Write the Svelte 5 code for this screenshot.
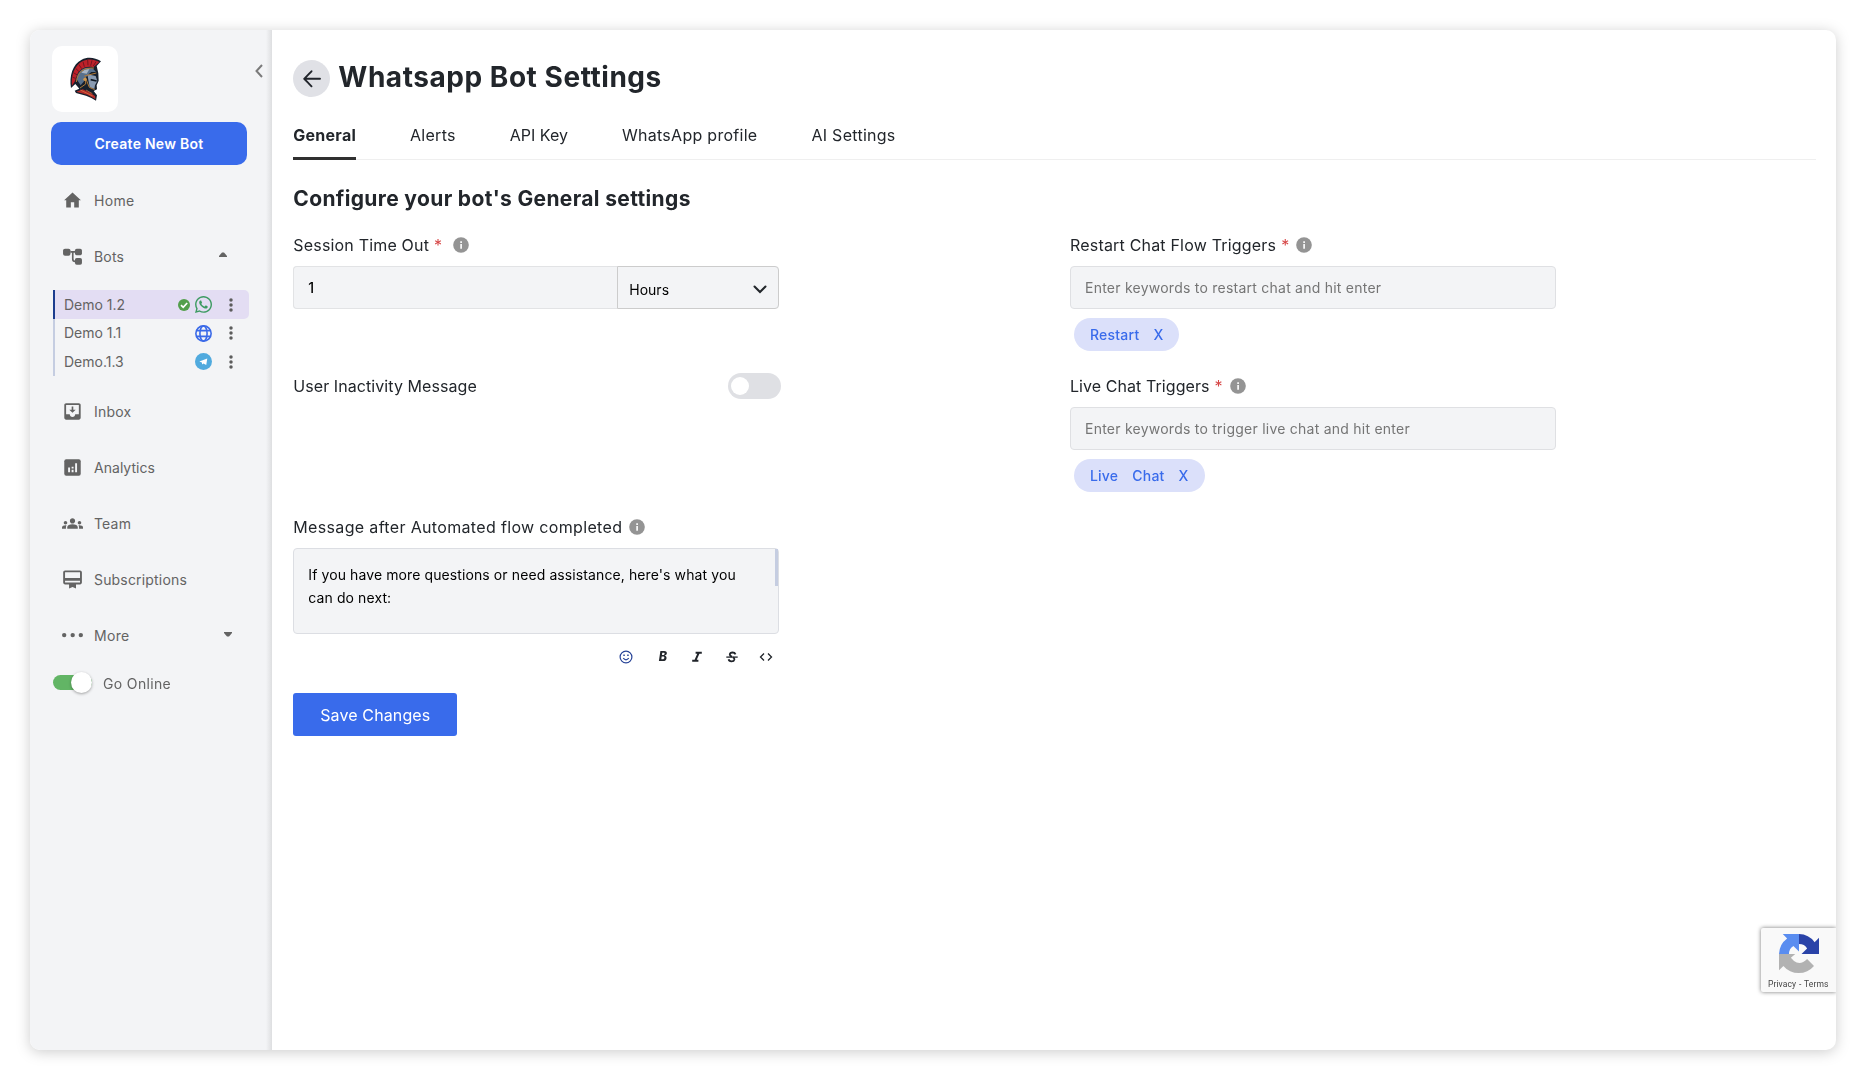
<script>
  let inactivity = $state(false);
  let online = $state(true);

  const nav = [
    { id: 'inbox', label: 'Inbox' },
    { id: 'analytics', label: 'Analytics' },
    { id: 'team', label: 'Team' },
    { id: 'subs', label: 'Subscriptions' }
  ];
  const bots = [
    { name: 'Demo 1.2', channel: 'whatsapp', active: true },
    { name: 'Demo 1.1', channel: 'web', active: false },
    { name: 'Demo.1.3', channel: 'telegram', active: false }
  ];
  const tabs = ['General', 'Alerts', 'API Key', 'WhatsApp profile', 'AI Settings'];
</script>

{#snippet info()}
  <svg class="info" viewBox="0 0 16 16"><circle cx="8" cy="8" r="7.800" fill="#949494" /><path d="M8.100 7v4.700M8.100 4.200v1.700" stroke="#fff" stroke-width="1.600" fill="none" /></svg>
{/snippet}

{#snippet navIcon(id)}
  <svg class="nav-icon" viewBox="0 0 24 24" fill="#636363">
    {#if id === 'home'}
      <path transform="translate(.5 .2) scale(.96)" d="M10 20.500v-6h4v6h5.500V12H22L12 2.800 2 12h2.500v8.500z" />
    {:else if id === 'bots'}
      <g><rect x="1.200" y="3" width="8.500" height="8" rx="2.200" /><rect x="14.800" y="3" width="8" height="7.500" rx="2" /><rect x="14.800" y="13.800" width="8" height="7.700" rx="2" /><path d="M9.500 6.800h5.500M12.300 6.800v8q0 2.700 2.700 2.700" fill="none" stroke="#636363" stroke-width="1.900" /></g>
    {:else if id === 'inbox'}
      <path transform="translate(-.5 -.5) scale(1.040)" d="M19 3H4.990c-1.110 0-1.980.89-1.980 2L3 19c0 1.100.88 2 1.990 2H19c1.100 0 2-.9 2-2V5c0-1.110-.9-2-2-2zm0 12h-4c0 1.660-1.350 3-3 3s-3-1.340-3-3H4.990V5H19v10zm-3.500-5h-2.600V6.500h-1.800V10H8.500l3.500 3.500z" />
    {:else if id === 'analytics'}
      <rect x="2.600" y="2.600" width="18.800" height="18.800" rx="2.200" /><path d="M7 12h2.200v5.500H7zM11 14.500h2.200v3H11zM11 11h2.200v2H11zM15 7h2.200v10.500H15z" fill="#f3f4f6" />
    {:else if id === 'team'}
      <path d="M12 12.750c1.630 0 3.070.39 4.240.9 1.080.48 1.760 1.560 1.760 2.730V18H6v-1.610c0-1.180.68-2.260 1.760-2.730 1.170-.52 2.610-.91 4.240-.91zM4 13c1.100 0 2-.9 2-2s-.9-2-2-2-2 .9-2 2 .9 2 2 2zm1.130 1.100c-.37-.06-.74-.1-1.130-.1-.99 0-1.930.21-2.780.58C.48 14.900 0 15.620 0 16.430V18h4.500v-1.610c0-.83.23-1.610.63-2.290zM20 13c1.100 0 2-.9 2-2s-.9-2-2-2-2 .9-2 2 .9 2 2 2zm4 3.430c0-.81-.48-1.530-1.220-1.850-.85-.37-1.790-.58-2.780-.58-.39 0-.76.04-1.130.1.400.68.630 1.460.630 2.290V18H24v-1.570zM12 6c1.660 0 3 1.340 3 3s-1.340 3-3 3-3-1.340-3-3 1.340-3 3-3z" />
    {:else if id === 'subs'}
      <path transform="translate(-.8 -.5) scale(1.070)" d="M20 2H4c-1.110 0-2 .89-2 2v11c0 1.110.89 2 2 2h4.300v4.300l3.700-1.500 3.700 1.500V17H20c1.110 0 2-.89 2-2V4c0-1.110-.89-2-2-2zm0 13H4v-2h16v2zm0-5H4V4h16v6z" />
    {:else}
      <circle cx="2.500" cy="11.500" r="2.500" /><circle cx="12.200" cy="11.500" r="2.500" /><circle cx="21.500" cy="11.500" r="2.500" />
    {/if}
  </svg>
{/snippet}

<div class="window">
  <aside>
    <div class="brand">
      <div class="logo">
        <svg viewBox="6 18 198 198">
          <path d="M63 144C57 108 68 72 95 59C113 50 135 52 153 64L140 78L145 100L146 122L140 136L141 148L131 153L141 166L138 182L124 174L108 167L78 159L74 152L88 146L76 132Z" fill="#17202d" />
          <path d="M66 137C63 106 73 77 97 64C115 55 132 58 148 66L130 82C104 76 84 90 79 112C76 122 73 129 66 137Z" fill="#bd2029" />
          <path d="M68 112l12 4M70 98l12 7M77 85l10 10M87 74l8 12M99 65l4 15M113 60l1 16M126 61l-4 16M138 65l-8 13" stroke="#62141d" stroke-width="2.500" />
          <path d="M80 118C82 97 96 84 112 83L128 85L138 96H124L112 106L102 124L92 136Z" fill="#58708c" />
          <path d="M94 98q9-11 24-10l-8 13z" fill="#a7b4c3" />
          <path d="M112 103L137 108L142 123L135 136L133 147L119 142Z" fill="#8a9bb1" />
          <path d="M79 126C83 94 102 83 132 84M103 108L139 99M106 112L118 142L134 149M90 144l17-12v-19" fill="none" stroke="#b07a38" stroke-width="3" />
          <path d="M122 119l18 4" stroke="#111923" stroke-width="5" />
          <circle cx="105" cy="118" r="5" fill="#d0974c" />
          <path d="M79 155L98 148L118 157L135 168L136 177L112 164Z" fill="#b42a28" />
          <path d="M108 150l19 11M91 150l37 18" stroke="#e08445" stroke-width="2" />
        </svg>
      </div>
      <svg class="collapse" viewBox="0 0 8 14"><path d="M7 1 1.500 7 7 13" fill="none" stroke="#7b7b7b" stroke-width="2" /></svg>
    </div>
    <button class="create">Create New Bot</button>

    <nav>
      <a class="item wide" href="#home">{@render navIcon('home')}<span>Home</span></a>
      <a class="item" href="#bots">{@render navIcon('bots')}<span>Bots</span><svg class="caret up" viewBox="0 0 8 5"><path d="M0 5V4L3 .5h2L8 4v1z" fill="#636363" /></svg></a>
      <ul>
        {#each bots as bot}
          <li class:active={bot.active}>
            <span class="bot-name">{bot.name}</span>
            {#if bot.channel === 'whatsapp'}
              <svg class="check" viewBox="0 0 12 12"><circle cx="6" cy="6" r="6" fill="#539f4c" /><path d="m3 6.200 2.200 2.100L9.200 4" fill="none" stroke="#fff" stroke-width="1.700" /></svg>
              <svg class="channel" viewBox="0 32 448 448"><path fill="#3d9b62" d="M380.900 97.100C339 55.100 283.200 32 223.900 32c-122.400 0-222 99.600-222 222 0 39.100 10.200 77.300 29.600 111L0 480l117.700-30.900c32.400 17.700 68.900 27 106.100 27h.1c122.300 0 224.100-99.600 224.100-222 0-59.300-25.200-115-67.100-157zm-157 341.600c-33.200 0-65.700-8.900-94-25.700l-6.700-4-69.800 18.300L72 359.200l-4.400-7c-18.500-29.400-28.200-63.300-28.200-98.200 0-101.700 82.800-184.500 184.600-184.500 49.300 0 95.600 19.200 130.400 54.100 34.800 34.900 56.200 81.200 56.100 130.500 0 101.800-84.900 184.600-186.600 184.600zm101.200-138.200c-5.500-2.800-32.800-16.200-37.900-18-5.100-1.900-8.800-2.800-12.500 2.800-3.700 5.600-14.300 18-17.600 21.800-3.200 3.700-6.500 4.200-12 1.400-32.600-16.300-54-29.100-75.500-66-5.700-9.800 5.700-9.100 16.300-30.300 1.800-3.700.9-6.900-.5-9.700-1.400-2.800-12.500-30.100-17.100-41.200-4.500-10.800-9.100-9.300-12.500-9.500-3.200-.2-6.900-.2-10.600-.2-3.700 0-9.700 1.400-14.800 6.900-5.100 5.600-19.400 19-19.400 46.300 0 27.300 19.900 53.700 22.600 57.400 2.800 3.700 39.100 59.700 94.800 83.800 35.200 15.200 49 16.500 66.600 13.900 10.700-1.600 32.800-13.400 37.400-26.400 4.600-13 4.600-24.100 3.200-26.400-1.300-2.500-5-3.900-10.500-6.600z" /></svg>
            {:else if bot.channel === 'web'}
              <svg class="channel" viewBox="0 0 18 18" fill="none" stroke="#3b6ae8" stroke-width="1.700"><circle cx="9" cy="9" r="8.100" /><ellipse cx="9" cy="9" rx="3.800" ry="8.100" /><path d="M1.500 6h15M1.500 12h15" /></svg>
            {:else}
              <svg class="channel" viewBox="0 0 18 18"><circle cx="9" cy="9" r="9" fill="#50aade" /><path d="M4.600 9 13 5.700 11.900 12.600 9 11 7.600 12.200 7.300 10z" fill="#fff" /></svg>
            {/if}
            <svg class="dots" viewBox="0 0 4 14" fill="#5c5c5c"><circle cx="2" cy="2" r="1.750" /><circle cx="2" cy="7" r="1.750" /><circle cx="2" cy="12" r="1.750" /></svg>
          </li>
        {/each}
      </ul>
      {#each nav as item}
        <a class="item" class:tight={item.id === 'analytics'} href="#{item.id}">{@render navIcon(item.id)}<span>{item.label}</span></a>
      {/each}
      <a class="item wide" href="#more">{@render navIcon('more')}<span>More</span><svg class="caret down" viewBox="0 0 8 5"><path d="M0 0v1l3 3.500h2L8 1V0z" fill="#636363" /></svg></a>
    </nav>
    <button class="online" class:on={online} onclick={() => (online = !online)}><i></i><span>Go Online</span></button>
  </aside>

  <main>
    <header>
      <button class="back" aria-label="Back"><svg viewBox="0 0 18 18" fill="none" stroke="#20242a" stroke-width="1.900" stroke-linecap="round" stroke-linejoin="round"><path d="M17 8.800H1.500M8.500 1.300 1.200 8.800l7.300 7.500" /></svg></button>
      <h1>Whatsapp Bot Settings</h1>
    </header>
    <div class="tabs">
      {#each tabs as tab, i}
        <button class="tab" class:current={i === 0} class:plain={tab === 'API Key'}>{tab}</button>
      {/each}
    </div>
    <h2>Configure your bot's General settings</h2>

    <div class="form">
      <section>
        <div class="label">Session Time Out <b>*</b><span class="gap"></span>{@render info()}</div>
        <div class="field split">
          <div class="value">1</div>
          <div class="select"><span>Hours</span><svg viewBox="0 0 14 9"><path d="m1.500 1.500 5.500 5.500 5.500-5.500" fill="none" stroke="#22262b" stroke-width="2.100" stroke-linecap="round" /></svg></div>
        </div>
      </section>
      <section>
        <div class="label roomy">Restart Chat Flow Triggers <b>*</b>{@render info()}</div>
        <div class="field placeholder">Enter keywords to restart chat and hit enter</div>
        <div class="chip"><span>Restart</span><span>X</span></div>
      </section>
      <section>
        <div class="switch-row">
          <div class="label close">User Inactivity Message</div>
          <button class="switch" class:checked={inactivity} aria-label="User Inactivity Message" onclick={() => (inactivity = !inactivity)}><i></i></button>
        </div>
      </section>
      <section>
        <div class="label close">Live Chat Triggers <b>*</b>{@render info()}</div>
        <div class="field placeholder">Enter keywords to trigger live chat and hit enter</div>
        <div class="chip"><span>Live</span><span>Chat</span><span>X</span></div>
      </section>
      <section>
        <div class="label loose">Message after Automated flow completed{@render info()}</div>
        <div class="message"><p>If you have more questions or need assistance, here's what you can do next:</p><i></i></div>
        <div class="tools">
          <svg viewBox="0 0 14 14" fill="none" stroke="#274397" stroke-width="1.200"><circle cx="7" cy="7" r="5.900" /><path d="M4.200 8.200q2.800 3.200 5.600 0" /><path d="M4.300 5.300h1.500M8.200 5.300h1.500" stroke-width="1.500" /></svg>
          <span>B</span>
          <svg viewBox="0 0 14 14" fill="none" stroke="#20242a" stroke-width="2"><path d="M5.600 2.800h6.200M2.200 10.700h6.200M8.700 2.800 5.300 10.700" /></svg>
          <svg viewBox="0 0 14 14" fill="none" stroke="#20242a"><path d="M10.500 4.300Q9.800 2.500 7.600 2.500 4.800 2.500 4.800 4.600 4.900 6 7 6.700M8 7.300Q9.700 8 9.400 9.500 8.900 11.500 6.400 11.400 4 11.300 3.600 9.300" stroke-width="1.800" /><path d="M1.300 7.100h11.400" stroke-width="1.300" /></svg>
          <svg viewBox="0 0 14 14" fill="none" stroke="#20242a" stroke-width="1.300"><path d="M5 3.500 1.500 7 5 10.500M9 3.500 12.500 7 9 10.500" /></svg>
        </div>
        <button class="save">Save Changes</button>
      </section>
    </div>

    <div class="recaptcha">
      <svg viewBox="0 0 64 64">
        <path d="M64 32V6l-7 7A32 32 0 0 0 32 0v16q9 0 13 7l-9 9z" fill="#2a43a8" />
        <path d="M32 0H6l7 7A32 32 0 0 0 0 32h16q0-9 7-13l9 9z" fill="#5a8df0" />
        <path d="M0 32v26l7-7a32 32 0 0 0 49 0L45 40q-11 11-21 3l-5-5 7-6z" fill="#b2b2b2" />
      </svg>
      <span>Privacy - Terms</span>
    </div>
  </main>
</div>

<style>
  :global(body) { margin: 0; background: #fff; }
  .window, .window * { box-sizing: border-box; }
  .window {
    position: relative; display: flex; width: 1806px; height: 1020px; margin: 30px; overflow: hidden;
    border-radius: 10px; background: #fff; font-family: "Inter", sans-serif; font-size: 14px; color: #22262b;
  }
  :global(#app) { display: flow-root; filter: drop-shadow(0 2px 7px rgba(0, 0, 0, .2)); }
  button { font: inherit; border: 0; padding: 0; }
  svg { display: block; flex: none; }

  aside { width: 242px; padding: 16px 15px 0 21px; background: linear-gradient(to right, #f3f4f6 236px, #dddee0 242px); }
  .brand { display: flex; justify-content: space-between; padding: 0 0 0 1px; }
  .logo { width: 66px; height: 66px; border-radius: 10px; background: #fff; }
  .logo svg { width: 66px; height: 66px; }
  .collapse { width: 8px; height: 14px; margin: 18px -6px 0 0; }
  .create {
    display: block; width: 196px; height: 43px; margin: 10px 0 7px; border-radius: 10px; background: #396beb;
    color: #fff; font-weight: 600; letter-spacing: .26px;
  }
  nav { color: #636363; letter-spacing: .18px; }
  .item { display: flex; align-items: center; height: 56px; padding-left: 11px; color: inherit; text-decoration: none; }
  .item span { margin: 1px 0 0 11px; line-height: 20px; }
  .wide { letter-spacing: .3px; }
  .tight { letter-spacing: .03px; }
  .nav-icon { width: 21px; height: 21px; overflow: visible; }
  .caret { width: 8px; height: 5px; }
  .up { margin: -3px 30px 0 auto; }
  .down { margin: -2px 25px 0 auto; }
  ul { margin: 6px 0 7px 2px; padding: 0; list-style: none; width: 196px; letter-spacing: 0; }
  li { display: flex; align-items: center; height: 28.5px; padding: 0 16px 0 9px; border-left: 2px solid #c5cde1; }
  li.active { height: 29px; background: #e3ddf3; border-left-color: #1c3c8e; border-radius: 0 5px 5px 0; }
  .bot-name { flex: 1; line-height: 20px; }
  .check { width: 12px; height: 12px; margin-right: 5px; }
  .channel { width: 17px; height: 17px; margin-right: 17px; }
  .dots { width: 4px; height: 14px; }
  .online { display: flex; align-items: center; height: 22px; margin: 8px 0 0 2px; background: none; color: #636363; letter-spacing: .35px; }
  .online i { display: flex; align-items: center; width: 39px; height: 15px; margin-right: 11px; border-radius: 8px; background: #b5b5b5; }
  .online i::before { content: ""; width: 21px; height: 21px; border-radius: 50%; background: #fff; box-shadow: 0 1px 3px rgba(0, 0, 0, .35); }
  .online.on i { justify-content: flex-end; background: #62b565; }
  .online span { margin-top: 2px; }

  main { flex: 1; padding: 30px 20px 0 21.3px; }
  header { display: flex; align-items: center; height: 37px; }
  .back { display: grid; place-items: center; width: 37px; height: 37px; border-radius: 50%; background: #e0e1e6; }
  .back svg { width: 18px; height: 18px; }
  h1 { margin: -3px 0 0 8px; font-size: 28px; line-height: 36px; font-weight: 700; letter-spacing: .54px; }
  .tabs { display: flex; gap: 54px; height: 63px; align-items: flex-end; box-shadow: inset 0 -1px #efefef; }
  .tab { height: 40px; padding: 3px 0 10px; border-bottom: 3px solid transparent; background: none; color: inherit; font-size: 16px; line-height: 24px; letter-spacing: .28px; }
  .plain { letter-spacing: 0; }
  .current { font-weight: 700; letter-spacing: .25px; border-color: #303030; }
  h2 { margin: 25px 0 22px; font-size: 21px; line-height: 28px; font-weight: 700; letter-spacing: .35px; }

  .form { display: grid; grid-template-columns: 776.7px 486px; grid-template-rows: 141px 141px auto; }
  section { width: 486px; }
  .label { display: flex; align-items: center; height: 20px; font-size: 16px; letter-spacing: .18px; }
  .label b { margin-left: 5px; color: #d64545; font-weight: 400; }
  .roomy { letter-spacing: .19px; }
  .close { letter-spacing: .07px; }
  .loose { letter-spacing: .34px; }
  .gap { width: 4px; }
  .info { width: 16px; height: 16px; margin-left: 7px; }
  .field { display: flex; align-items: center; height: 43px; margin-top: 11px; border: 1px solid #dfe0e3; border-radius: 4px; background: #f3f4f6; }
  .placeholder { padding-left: 14px; color: #757575; letter-spacing: .24px; }
  .split { border: 0; color: #000; }
  .value { width: 324px; height: 43px; padding-left: 14px; border: 1px solid #e2e3e5; border-right: 0; border-radius: 4px 0 0 4px; line-height: 41px; font-weight: 500; }
  .select { display: flex; flex: 1; align-items: center; justify-content: space-between; height: 43px; padding: 3px 11px 0; border: 1px solid #ccc; border-radius: 0 4px 4px 0; }
  .select svg { width: 14px; height: 9px; }
  .chip { display: inline-flex; align-items: center; gap: 14px; height: 33px; margin: 9px 0 0 4px; padding: 0 16px; border-radius: 17px; background: #dbe0fa; color: #396beb; font-weight: 500; letter-spacing: .22px; }
  .switch-row { display: flex; justify-content: space-between; width: 488px; }
  .switch { display: flex; align-items: center; width: 53px; height: 26px; margin-top: -3px; padding: 0 3px; border-radius: 13px; background: #dfe0e4; }
  .switch i { width: 18px; height: 18px; border-radius: 50%; background: #fff; }
  .checked { justify-content: flex-end; background: #396beb; }
  .message { display: flex; justify-content: space-between; height: 86px; margin-top: 11px; padding: 0 0 0 14px; border: 1px solid #dcdee3; border-radius: 4px; background: #f3f4f6; color: #000; }
  .message p { width: 440px; margin: 14px 0 0; line-height: 23px; letter-spacing: .1px; }
  .message i { width: 3px; height: 37px; background: #c5cde1; }
  .tools { display: flex; justify-content: flex-end; align-items: center; gap: 20.500px; height: 14px; margin: 16px 6px 0 0; }
  .tools svg, .tools span { width: 14px; height: 14px; line-height: 14px; text-align: center; font-size: 12.500px; font-weight: 800; font-style: italic; }
  .tools svg:first-child { margin-right: 2px; }
  .save { display: block; width: 164px; height: 43px; margin-top: 29px; border-radius: 3px; background: #396beb; color: #fff; font-size: 16px; letter-spacing: .12px; }

  .recaptcha {
    position: absolute; top: 898px; right: 0; width: 75px; height: 64px; padding: 6px 0 0 7px; border-radius: 2px 0 0 2px;
    background: #f9f9f9; box-shadow: 0 0 4px #777; font: 8.500px/14px "Roboto", sans-serif; letter-spacing: .1px; word-spacing: .6px; color: #444;
  }
  .recaptcha svg { width: 40px; height: 40px; margin: 0 0 3px 11px; }
</style>
